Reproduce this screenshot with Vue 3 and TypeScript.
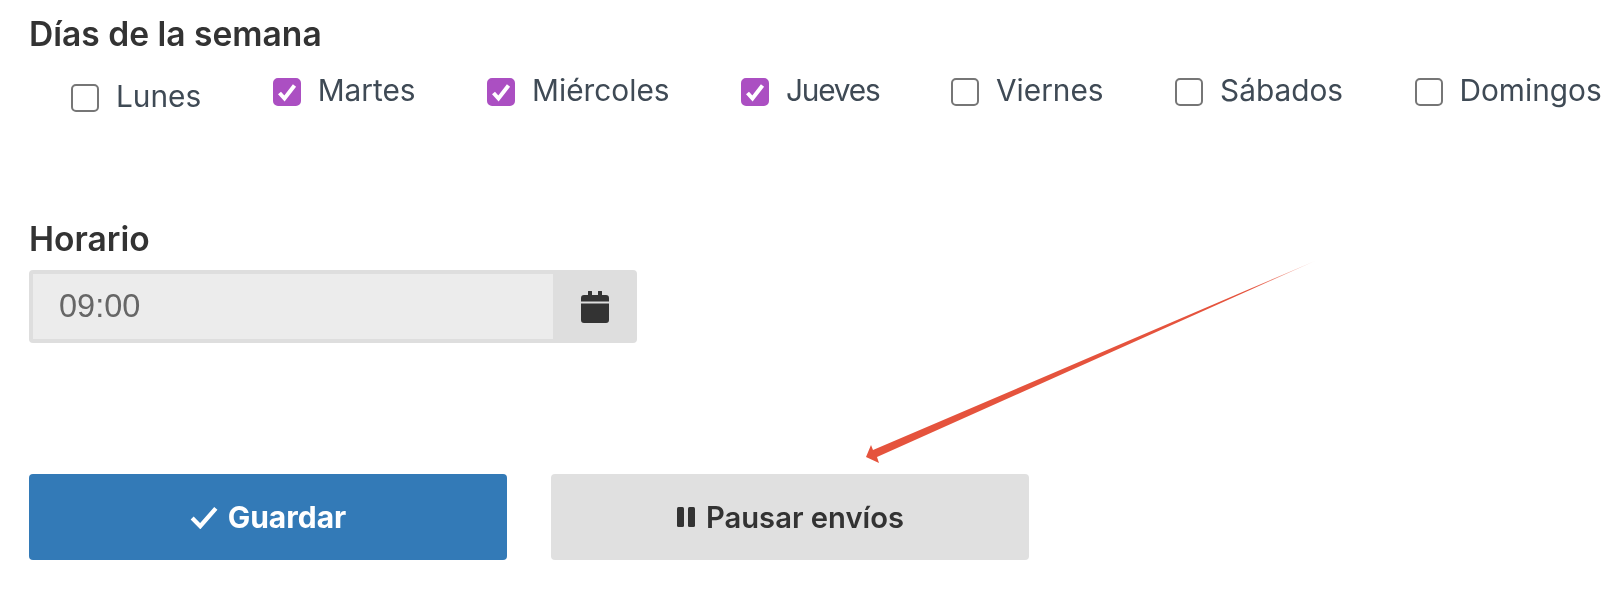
<script setup lang="ts">
import { ref } from 'vue'

// dias de envio
const days = ref([
  { name: 'Lunes', on: false },
  { name: 'Martes', on: true },
  { name: 'Miércoles', on: true },
  { name: 'Jueves', on: true },
  { name: 'Viernes', on: false },
  { name: 'Sábados', on: false },
  { name: 'Domingos', on: false },
])
const hora = ref('09:00')
</script>

<template>
  <div class="page">
    <h3 class="heading">Días de la semana</h3>
    <div class="days">
      <label v-for="d in days" :key="d.name" class="day">
        <span :class="['box', { on: d.on }]">
          <svg v-if="d.on" viewBox="0 0 24 24" width="26" height="26">
            <path d="M4.500 13l5 5.500L19.500 5.500" fill="none" stroke="#fff" stroke-width="4" />
          </svg>
        </span>
        <span class="day-name">{{ d.name }}</span>
      </label>
    </div>

    <h3 class="heading horario">Horario</h3>
    <div class="time">
      <div class="time-value">{{ hora }}</div>
      <div class="time-addon">
        <svg viewBox="0 0 28 32" width="28" height="32">
          <path fill="#333" d="M7 1a2 2 0 0 1 4 0v3h6V1a2 2 0 0 1 4 0v3h4A3 3 0 0 1 28 7v3.500H0V7a3 3 0 0 1 3-3h4zM0 12.500h28V29a3 3 0 0 1-3 3H3a3 3 0 0 1-3-3z" />
        </svg>
      </div>
    </div>

    <div class="actions">
      <button class="btn primary">
        <svg viewBox="0 0 26 22" width="28" height="24">
          <path d="M2 12l7.500 7.500L24 3" fill="none" stroke="#fff" stroke-width="4" />
        </svg>
        Guardar
      </button>
      <button class="btn muted">
        <svg viewBox="0 0 20 22" width="20" height="22">
          <rect x="1" y="1" width="7" height="20" rx="1.500" fill="#333" />
          <rect x="12" y="1" width="7" height="20" rx="1.500" fill="#333" />
        </svg>
        Pausar envíos
      </button>
    </div>

    <svg class="arrow" viewBox="0 0 1623 599" width="1623" height="599">
      <defs>
        <linearGradient id="fade" gradientUnits="userSpaceOnUse" x1="1315" y1="261" x2="1250" y2="289">
          <stop offset="0" stop-color="#e5533d" stop-opacity="0.25" />
          <stop offset="1" stop-color="#e5533d" />
        </linearGradient>
      </defs>
      <path fill="url(#fade)" d="M1315 261L873 450L871 445L866 457L879 463L877 457Z" />
    </svg>
  </div>
</template>

<style>
html,
body {
  background: #fff;
}
</style>

<style scoped>
.page {
  position: relative;
  width: 1623px;
  height: 599px;
  overflow: hidden;
  box-sizing: border-box;
  padding: 14px 0 0 29px;
  font-family: Inter, "Liberation Sans", sans-serif;
  color: #333;
  filter: blur(0.5px);
}
.heading {
  margin: 0;
  font-size: 33.600px;
  line-height: 40px;
  font-weight: 600;
}
.days {
  display: flex;
  gap: 71.500px;
  padding: 19px 0 0 42px;
  height: 58px;
  align-items: flex-start;
}
.day {
  display: flex;
  align-items: center;
  gap: 17px;
  font-size: 29.800px;
  line-height: 34px;
  color: #3f4a55;
}
.day:first-child {
  margin-top: 6px;
}
.day:nth-child(4) .day-name {
  letter-spacing: -1.200px;
}
.box {
  width: 28px;
  height: 28px;
  margin-top: 4px;
  box-sizing: border-box;
  border: 2px solid #767676;
  border-radius: 5px;
  background: #fff;
  display: flex;
  align-items: center;
  justify-content: center;
}
.box.on {
  background: #ab4fc2;
  border-color: #ab4fc2;
}
.horario {
  margin-top: 88px;
}
.time {
  display: flex;
  width: 608px;
  height: 73px;
  margin-top: 11px;
  background: #dedede;
  border-radius: 4px;
  padding: 4px 0 4px 4px;
  box-sizing: border-box;
}
.time-value {
  flex: 1;
  background: #ececec;
  padding-left: 26px;
  font-size: 32.500px;
  line-height: 65px;
  color: #666;
  font-family: "Liberation Sans", sans-serif;
}
.time-addon {
  width: 84px;
  display: flex;
  align-items: center;
  justify-content: center;
}
.actions {
  display: flex;
  gap: 44px;
  margin-top: 131px;
}
.btn {
  width: 478px;
  height: 86px;
  border: none;
  border-radius: 4px;
  font-family: inherit;
  font-size: 29.200px;
  font-weight: 600;
  display: flex;
  align-items: center;
  justify-content: center;
  gap: 10px;
}
.primary {
  background: #337ab7;
  color: #fff;
  font-size: 30px;
  font-weight: 700;
}
.muted {
  background: #e0e0e0;
  color: #333;
}
.arrow {
  position: absolute;
  left: 0;
  top: 0;
  pointer-events: none;
}
</style>
